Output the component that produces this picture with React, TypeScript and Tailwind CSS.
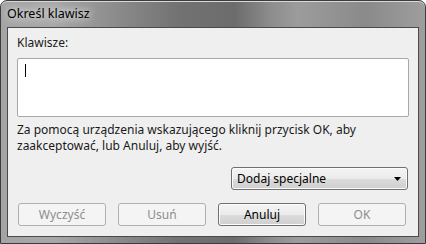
const font = "font-['Segoe_UI','Noto_Sans','Open_Sans',sans-serif]";

function PushButton({ label, enabled = false }: { label: string; enabled?: boolean }) {
  return (
    <button
      className={
        enabled
          ? "h-[23px] w-[88px] rounded-[3px] border border-[#707070] bg-[linear-gradient(180deg,#f4f4f4_0%,#ebebeb_50%,#dcdcdc_51%,#cfcfcf_100%)] text-[12px] leading-none text-black shadow-[inset_0_0_0_1px_#fcfcfc]"
          : "h-[23px] w-[88px] rounded-[3px] border border-[#b0b0b0] bg-[#f4f4f4] text-[12px] leading-none text-[#8d8d8d]"
      }
    >
      {label}
    </button>
  );
}

export default function App() {
  return (
    <div className={`${font} w-[426px] h-[244px] overflow-hidden bg-white`}>
      <div className="flex h-full flex-col rounded-t-[7px] border border-[#3c3c3c] bg-[linear-gradient(90deg,#a4a4a4_0%,#a8a8a8_12%,#8a8a8a_28%,#727272_42%,#6c6c6c_55%,#8e8e8e_64%,#9c9c9c_70%,#8a8a8a_86%,#9e9e9e_100%)] shadow-[inset_0_1px_0_#d8d8d8]">
        <div className="flex h-[26px] items-center px-[6px] pt-[1px]">
          <span className="text-[12.5px] text-black [text-shadow:0_0_6px_#e8e8e8,0_0_10px_#dcdcdc]">Określ klawisz</span>
        </div>

        <div className="mx-[6px] mb-[6px] flex flex-1 flex-col border border-[#4a4a4a] bg-[#efefef] px-[9px] pt-[7px] pb-[10px] text-[12px] text-[#1a1a1a]">
          <div className="leading-[15px]">Klawisze:</div>
          <div className="mt-[8px] h-[59px] rounded-[2px] border border-[#a8a8a8] bg-white px-[7px] pt-[5px]">
            <div className="h-[13px] w-px bg-black" />
          </div>
          <p className="mt-[5px] leading-[16px]">
            Za pomocą urządzenia wskazującego kliknij przycisk OK, aby
            <br />
            zaakceptować, lub Anuluj, aby wyjść.
          </p>

          <div className="mt-[13px] flex justify-end pr-[1px]">
            <div className="flex h-[23px] w-[177px] items-center justify-between rounded-[3px] border border-[#707070] bg-[linear-gradient(180deg,#f4f4f4_0%,#ebebeb_50%,#dcdcdc_51%,#cfcfcf_100%)] pl-[5px] pr-[6px] text-black shadow-[inset_0_0_0_1px_#fbfbfb]">
              <span>Dodaj specjalne</span>
              <svg width="7" height="4" viewBox="0 0 7 4">
                <path d="M0 0h7L3.5 4z" fill="#000" />
              </svg>
            </div>
          </div>

          <div className="mt-auto flex gap-[12px] pl-[1px]">
            <PushButton label="Wyczyść" />
            <PushButton label="Usuń" />
            <PushButton label="Anuluj" enabled />
            <PushButton label="OK" />
          </div>
        </div>
      </div>
    </div>
  );
}
